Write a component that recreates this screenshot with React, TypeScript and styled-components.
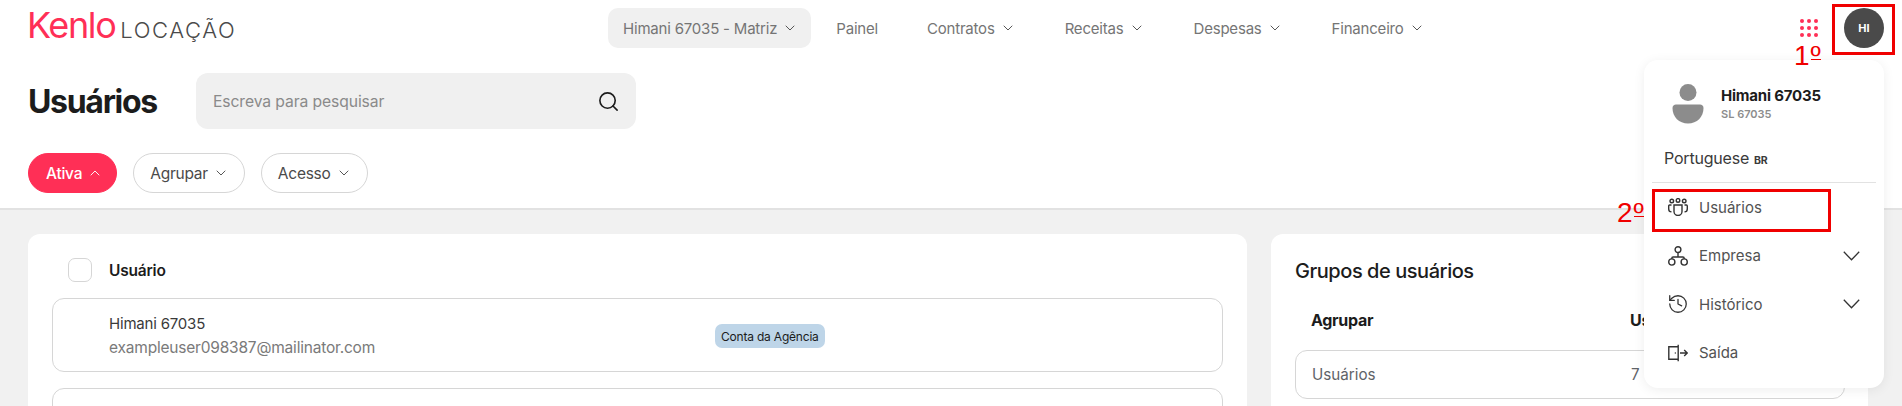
import React from "react";
import styled, { createGlobalStyle } from "styled-components";
import { ChevronDown, ChevronUp, Search, History } from "lucide-react";

const GlobalStyle = createGlobalStyle`
  html, body {
    margin: 0;
    padding: 0;
    height: 406px;
    overflow: hidden;
    background: #ffffff;
    font-family: Inter, "Liberation Sans", sans-serif;
  }
  * { box-sizing: border-box; }
`;

const Page = styled("div")`
  position: relative;
  width: 1902px;
  height: 406px;
  overflow: hidden;
`;

const Header = styled("header")`
  display: flex;
  align-items: center;
  height: 56px;
  padding: 0 18px 0 28px;
`;

const Logo = styled("div")`
  display: flex;
  align-items: baseline;
  width: 581px;
  margin-bottom: 7px;
  margin-left: -1px;
  white-space: nowrap;
`;

const LogoMark = styled("span")`
  color: #ff2f56;
  font-size: 36px;
  font-weight: 400;
  letter-spacing: -1.4px;
  line-height: 40px;
`;

const LogoText = styled("span")`
  margin-left: 5px;
  color: #4a4a4a;
  font-size: 22px;
  font-weight: 300;
  letter-spacing: 1.6px;
`;

const Nav = styled("nav")`
  display: flex;
  align-items: center;
  gap: 10px;
`;

const NavItem = styled("div")<{ $active?: boolean }>`
  display: flex;
  align-items: center;
  gap: 5px;
  height: 40px;
  padding: ${(p) => (p.$active ? "0 13px 0 15px" : "0 15px")};
  margin-right: ${(p) => (p.$active ? "0" : "9px")};
  border-radius: 10px;
  background: ${(p) => (p.$active ? "#f0f0f0" : "transparent")};
  color: #757575;
  font-size: 15px;
  letter-spacing: -0.2px;
  white-space: nowrap;
`;

const Actions = styled("div")`
  display: flex;
  align-items: center;
  gap: 26px;
  margin-left: auto;
`;

const Dots = styled("div")`
  display: grid;
  grid-template-columns: repeat(3, 4px);
  gap: 3px;
`;

const Dot = styled("span")`
  width: 4px;
  height: 4px;
  border-radius: 50%;
  background: #ff2f56;
`;

const Avatar = styled("div")`
  display: flex;
  align-items: center;
  justify-content: center;
  width: 40px;
  height: 40px;
  border-radius: 50%;
  background: #4a4a4a;
  color: #ffffff;
  font-size: 11px;
  font-weight: 700;
`;

const TitleRow = styled("div")`
  display: flex;
  align-items: center;
  gap: 40px;
  padding: 17px 0 0 28px;
`;

const Title = styled("h1")`
  width: 128px;
  margin: 2px 0 0;
  color: #1c1c1c;
  font-size: 32px;
  font-weight: 700;
  letter-spacing: -1.3px;
  line-height: 54px;
  white-space: nowrap;
`;

const SearchBox = styled("div")`
  display: flex;
  align-items: center;
  justify-content: space-between;
  width: 440px;
  height: 56px;
  padding: 0 16px 0 17px;
  border-radius: 12px;
  background: #f0f0f0;
  color: #8a8a8a;
  font-size: 15.7px;
  letter-spacing: -0.1px;
`;

const Filters = styled("div")`
  display: flex;
  gap: 16px;
  height: 81px;
  padding: 24px 0 0 28px;
  border-bottom: 2px solid #e2e2e2;
`;

const Chip = styled("div")<{ $active?: boolean }>`
  display: flex;
  align-items: center;
  gap: 5px;
  height: 40px;
  padding: ${(p) => (p.$active ? "0 13px 0 17px" : "0 15px 0 16px")};
  border: 1px solid ${(p) => (p.$active ? "#ff2f56" : "#d6d6d6")};
  border-radius: 20px;
  background: ${(p) => (p.$active ? "#ff2f56" : "#ffffff")};
  color: ${(p) => (p.$active ? "#ffffff" : "#4a4a4a")};
  font-size: 15.5px;
  font-weight: ${(p) => (p.$active ? 500 : 400)};
  letter-spacing: -0.25px;
`;

const Main = styled("main")`
  display: grid;
  grid-template-columns: 1219px 597px;
  gap: 24px;
  height: 197px;
  padding: 24px 0 0 28px;
  background: #f1f1f1;
`;

const Card = styled("section")`
  height: 300px;
  border-radius: 12px;
  background: #ffffff;
`;

const UserCard = styled(Card)`
  padding: 24px;
`;

const UserHead = styled("div")`
  display: flex;
  align-items: center;
  gap: 17px;
  height: 24px;
  padding-left: 16px;
  margin-bottom: 16px;
`;

const Checkbox = styled("span")`
  width: 24px;
  height: 24px;
  border: 1px solid #d6d6d6;
  border-radius: 7px;
`;

const HeadLabel = styled("span")`
  color: #1c1c1c;
  font-size: 15.5px;
  font-weight: 600;
  letter-spacing: -0.2px;
`;

const UserRow = styled("div")`
  display: flex;
  align-items: center;
  width: 1171px;
  height: 74px;
  margin-bottom: 16px;
  padding-left: 56px;
  border: 1px solid #d6d6d6;
  border-radius: 12px;
`;

const UserInfo = styled("div")`
  display: flex;
  flex-direction: column;
  gap: 4px;
  width: 606px;
  padding-top: 2px;
`;

const UserName = styled("span")`
  color: #3a3a3a;
  font-size: 15px;
  line-height: 20px;
  letter-spacing: -0.2px;
`;

const UserMail = styled("span")`
  color: #7a7a7a;
  font-size: 15.5px;
  line-height: 20px;
  letter-spacing: -0.2px;
`;

const Badge = styled("span")`
  display: flex;
  align-items: center;
  height: 24px;
  margin-top: 2px;
  padding: 0 6px;
  border-radius: 7px;
  background: #bed5e8;
  color: #1c1c1c;
  font-size: 12px;
  letter-spacing: -0.2px;
`;

const GroupCard = styled(Card)`
  padding: 24px;
`;

const GroupTitle = styled("h2")`
  margin: 0 0 22px;
  color: #1c1c1c;
  font-size: 20px;
  font-weight: 500;
  line-height: 26px;
  letter-spacing: -0.45px;
`;

const GroupGrid = styled("div")`
  display: grid;
  grid-template-columns: 319px 1fr;
  padding: 0 16px;
  height: 28px;
  align-items: center;
  margin-bottom: 16px;
`;

const GroupLabel = styled("span")`
  color: #1c1c1c;
  font-size: 16px;
  font-weight: 700;
  letter-spacing: -0.3px;
`;

const GroupRow = styled(GroupGrid)`
  width: 550px;
  height: 49px;
  margin: 0;
  border: 1px solid #d6d6d6;
  border-radius: 12px;
  color: #5f6368;
  font-size: 15.2px;
`;

const Menu = styled("div")`
  position: absolute;
  top: 60px;
  left: 1644px;
  width: 240px;
  height: 328px;
  padding: 24px 8px 0;
  border-radius: 14px;
  background: #ffffff;
  box-shadow: 0 2px 12px rgba(0, 0, 0, 0.07);
`;

const Profile = styled("div")`
  display: flex;
  align-items: center;
  gap: 17px;
  height: 39px;
  padding-left: 20px;
`;

const ProfileName = styled("div")`
  color: #1c1c1c;
  font-size: 15px;
  font-weight: 700;
  line-height: 20px;
  letter-spacing: -0.2px;
`;

const ProfileCode = styled("div")`
  color: #8d8d8d;
  font-size: 11px;
  font-weight: 600;
  line-height: 16px;
`;

const Language = styled("div")`
  display: flex;
  align-items: baseline;
  gap: 5px;
  height: 60px;
  padding: 25px 0 0 12px;
  border-bottom: 1px solid #e2e2e2;
  color: #3a3a3a;
  font-size: 16px;
  letter-spacing: -0.2px;
`;

const Region = styled("span")`
  font-size: 10.5px;
  font-weight: 700;
`;

const MenuItem = styled("div")`
  display: flex;
  align-items: center;
  gap: 11px;
  height: 48.5px;
  padding: 0 16px;
  color: #525252;
  font-size: 15px;
  svg {
    flex-shrink: 0;
  }
`;

const ItemIcon = styled("span")`
  display: flex;
  justify-content: center;
  width: 20px;
`;

const MenuChevron = styled("svg")`
  margin-left: auto;
`;

const RedBox = styled("div")<{ $x: number; $y: number; $w: number; $h: number }>`
  position: absolute;
  left: ${(p) => p.$x}px;
  top: ${(p) => p.$y}px;
  width: ${(p) => p.$w}px;
  height: ${(p) => p.$h}px;
  border: 3px solid #f00000;
`;

const RedLabel = styled("span")<{ $x: number; $y: number }>`
  position: absolute;
  display: flex;
  left: ${(p) => p.$x}px;
  top: ${(p) => p.$y}px;
  color: #f00000;
  font-family: "Liberation Sans", sans-serif;
  font-size: 28px;
  line-height: 30px;
`;

const Ordinal = styled("span")`
  display: block;
  width: 10px;
  height: 19px;
  margin-left: 1px;
  border-bottom: 1.5px solid #f00000;
  text-align: center;
`;

const UsersIcon = () => (
  <svg width="20" height="18" viewBox="0 0 20 18" fill="none" stroke="#333" strokeWidth="1.4">
    <circle cx="10" cy="2.4" r="1.8" />
    <circle cx="3.8" cy="3" r="1.8" />
    <circle cx="16.2" cy="3" r="1.8" />
    <path d="M6 7h8v6.5a4 4 0 0 1-8 0z" />
    <path d="M3.5 7H1.6a.9.9 0 0 0-.9.9v3a3 3 0 0 0 2.8 3" />
    <path d="M16.5 7h1.9a.9.9 0 0 1 .9.9v3a3 3 0 0 1-2.8 3" />
  </svg>
);

const TreeIcon = () => (
  <svg width="20" height="20" viewBox="0 0 20 20" fill="none" stroke="#333" strokeWidth="1.4">
    <circle cx="10" cy="3.6" r="2.9" />
    <circle cx="3.8" cy="16" r="3.1" />
    <circle cx="16.2" cy="16" r="3.1" />
    <path d="M10 6.5V11M3.8 12.9v-.6c0-.8.5-1.3 1.3-1.3h9.8c.8 0 1.3.5 1.3 1.3v.6" />
  </svg>
);

const ExitIcon = () => (
  <svg width="20" height="18" viewBox="0 0 20 18" fill="none" stroke="#333" strokeWidth="1.4">
    <path d="M10 2.8H.8v12.4H10" />
    <path d="M10.2.8v16.4" />
    <path d="M12 9h7.2M16.2 6l3 3-3 3" />
    <path d="M6.8 9h1" />
  </svg>
);

const Chevron = () => (
  <MenuChevron width="17" height="10" viewBox="0 0 17 10" fill="none" stroke="#333" strokeWidth="1.3">
    <path d="M.8.8l7.7 8 7.7-8" />
  </MenuChevron>
);

const PersonIcon = () => (
  <svg width="32" height="40" viewBox="0 0 32 40" fill="#8c8c8c">
    <circle cx="16" cy="8.5" r="8.5" />
    <path d="M4 20.5h24c2 0 3.5 1.5 3.5 3.5 0 9-6.5 15.5-15.5 15.5S.5 33 .5 24c0-2 1.5-3.5 3.5-3.5z" />
  </svg>
);

const NavChevron = () => <ChevronDown size={16} strokeWidth={1.4} color="#4a4a4a" />;

const App = () => {
  return (
    <Page>
      <GlobalStyle />
      <Header>
        <Logo>
          <LogoMark>Kenlo</LogoMark>
          <LogoText>LOCAÇÃO</LogoText>
        </Logo>
        <Nav>
          <NavItem $active>
            Himani 67035 - Matriz <NavChevron />
          </NavItem>
          <NavItem>Painel</NavItem>
          <NavItem>
            Contratos <NavChevron />
          </NavItem>
          <NavItem>
            Receitas <NavChevron />
          </NavItem>
          <NavItem>
            Despesas <NavChevron />
          </NavItem>
          <NavItem>
            Financeiro <NavChevron />
          </NavItem>
        </Nav>
        <Actions>
          <Dots>
            {Array.from({ length: 9 }).map((_, i) => (
              <Dot key={i} />
            ))}
          </Dots>
          <Avatar>HI</Avatar>
        </Actions>
      </Header>

      <TitleRow>
        <Title>Usuários</Title>
        <SearchBox>
          Escreva para pesquisar
          <Search size={23} color="#1c1c1c" strokeWidth={1.7} />
        </SearchBox>
      </TitleRow>

      <Filters>
        <Chip $active>
          Ativa <ChevronUp size={16} strokeWidth={1.4} />
        </Chip>
        <Chip>
          Agrupar <NavChevron />
        </Chip>
        <Chip>
          Acesso <NavChevron />
        </Chip>
      </Filters>

      <Main>
        <UserCard>
          <UserHead>
            <Checkbox />
            <HeadLabel>Usuário</HeadLabel>
          </UserHead>
          <UserRow>
            <UserInfo>
              <UserName>Himani 67035</UserName>
              <UserMail>exampleuser098387@mailinator.com</UserMail>
            </UserInfo>
            <Badge>Conta da Agência</Badge>
          </UserRow>
          <UserRow />
        </UserCard>
        <GroupCard>
          <GroupTitle>Grupos de usuários</GroupTitle>
          <GroupGrid>
            <GroupLabel>Agrupar</GroupLabel>
            <GroupLabel>Usuários</GroupLabel>
          </GroupGrid>
          <GroupRow>
            <span>Usuários</span>
            <span>7</span>
          </GroupRow>
        </GroupCard>
      </Main>

      <Menu>
        <Profile>
          <PersonIcon />
          <div>
            <ProfileName>Himani 67035</ProfileName>
            <ProfileCode>SL 67035</ProfileCode>
          </div>
        </Profile>
        <Language>
          Portuguese <Region>BR</Region>
        </Language>
        <MenuItem>
          <ItemIcon>
            <UsersIcon />
          </ItemIcon>
          Usuários
        </MenuItem>
        <MenuItem>
          <ItemIcon>
            <TreeIcon />
          </ItemIcon>
          Empresa
          <Chevron />
        </MenuItem>
        <MenuItem>
          <ItemIcon>
            <History size={22} strokeWidth={1.4} color="#333" />
          </ItemIcon>
          Histórico
          <Chevron />
        </MenuItem>
        <MenuItem>
          <ItemIcon>
            <ExitIcon />
          </ItemIcon>
          Saída
        </MenuItem>
      </Menu>

      <RedBox $x={1832} $y={4} $w={63} $h={51} />
      <RedBox $x={1652} $y={189} $w={179} $h={43} />
      <RedLabel $x={1794} $y={41}>1<Ordinal>º</Ordinal></RedLabel>
      <RedLabel $x={1617} $y={198}>2<Ordinal>º</Ordinal></RedLabel>
    </Page>
  );
};

export default App;
